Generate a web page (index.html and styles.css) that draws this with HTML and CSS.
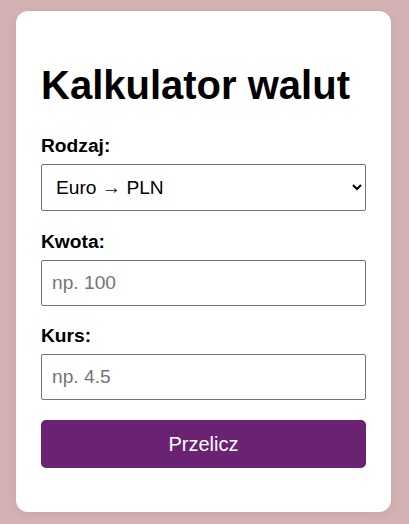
FILE: index.html
```html
<!DOCTYPE html>
<html lang="pl">
<head>
<meta charset="UTF-8">
<meta name="viewport" content="width=device-width, initial-scale=1.0">
<title>Kalkulator walut</title>
<link rel="stylesheet" href="styles.css">
</head>
<body>

<div class="calc-container">
  <h1>Kalkulator walut</h1>
  <form>
    <label for="rodzaj">Rodzaj:</label>
    <select id="rodzaj" name="rodzaj">
      <option value="eur-pln">Euro → PLN</option>
      <option value="pln-eur">PLN → Euro</option>
    </select>

    <label for="kwota">Kwota:</label>
    <input type="number" id="kwota" name="kwota" placeholder="np. 100">

    <label for="kurs">Kurs:</label>
    <input type="number" id="kurs" name="kurs" placeholder="np. 4.5">

    <button type="button">Przelicz</button>
  </form>
</div>

</body>
</html>
```

FILE: styles.css
```css
body {
  font-family: "Liberation Sans", Arial, sans-serif;
  background-color: #d4b2b4;
  margin: 0;
  padding: 11px 18px 14px 16px;
}
.calc-container {
  background-color: white;
  width: 375px;
  box-sizing: border-box;
  padding: 25px;
  border-radius: 12px;
  box-shadow: 0 2px 10px rgba(0,0,0,0.08);
}
h1 {
  font-size: 40px;
  margin: 27px 0;
}
label {
  display: block;
  font-weight: bold;
  font-size: 19.2px;
  margin-bottom: 7px;
}
select,
input {
  display: block;
  width: 100%;
  padding: 11px 10px;
  margin: 0 0 19.5px;
  font-family: inherit;
  font-size: 19.2px;
  border: 1px solid #767676;
  border-radius: 2px;
  box-sizing: border-box;
  background-color: white;
  color: black;
}
button {
  display: block;
  width: 100%;
  padding: 12px;
  line-height: 24px;
  margin-bottom: 19.5px;
  font-family: inherit;
  font-size: 20px;
  background-color: #6a2272;
  color: white;
  border: none;
  border-radius: 5px;
  cursor: pointer;
}
button:hover {
  background-color: #5a1b61;
}
```
